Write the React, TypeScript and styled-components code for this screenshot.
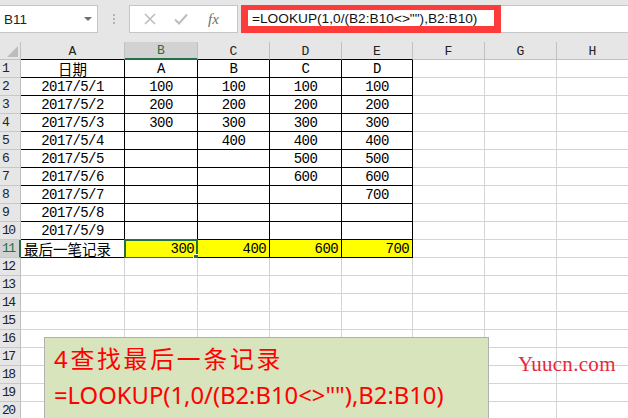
import React, { Fragment } from "react";
import styled, { createGlobalStyle } from "styled-components";

const GlobalStyle = createGlobalStyle`
  html, body {
    margin: 0;
    padding: 0;
    background: #ffffff;
    overflow: hidden;
  }
`;

const GREEN = "#217346";
const GRID = "#d4d4d4";

//page
const Page = styled.div`
  position: relative;
  width: 628px;
  height: 418px;
  overflow: hidden;
  background: #ffffff;
`;

//formula bar
const TopBar = styled.div`
  display: flex;
  align-items: flex-start;
  height: 42px;
  padding-top: 5px;
  box-sizing: border-box;
  background: #e6e6e6;
`;
const NameBox = styled.div`
  position: relative;
  display: flex;
  align-items: center;
  width: 98px;
  height: 28px;
  box-sizing: border-box;
  padding-left: 4px;
  background: #ffffff;
  border: 1px solid #c6c6c6;
  border-left: none;
  font-family: "Liberation Sans", Arial, sans-serif;
  font-size: 13.5px;
  color: #222;
`;
const DropArrow = styled.span`
  position: absolute;
  right: 5px;
  top: 11px;
  width: 0;
  height: 0;
  border-left: 4px solid transparent;
  border-right: 4px solid transparent;
  border-top: 4px solid #707070;
`;
const Dots = styled.div`
  display: flex;
  flex-direction: column;
  align-items: center;
  justify-content: center;
  gap: 2px;
  width: 31px;
  height: 28px;
  span {
    width: 2px;
    height: 2px;
    background: #b4b4b4;
  }
`;
const IconBox = styled.div`
  display: flex;
  align-items: center;
  width: 109px;
  height: 28px;
  box-sizing: border-box;
  padding-left: 14px;
  gap: 18px;
  background: #ffffff;
  border: 1px solid #c6c6c6;
`;
const Fx = styled.span`
  font-family: "Liberation Serif", "Times New Roman", serif;
  font-style: italic;
  font-size: 15px;
  color: #6e6e6e;
  margin-left: 2px;
`;
const FormulaBox = styled.div`
  flex: 1;
  height: 28px;
  margin-left: 3px;
  box-sizing: border-box;
  background: #ffffff;
  border: 1px solid #c6c6c6;
  border-right: none;
  display: flex;
`;
const RedMark = styled.div`
  width: 260px;
  height: 28px;
  margin: -1px 0 0 -1px;
  box-sizing: border-box;
  border: 7px solid #fd3b3b;
  border-top-width: 5px;
  padding-left: 4px;
  display: flex;
  align-items: center;
  font-family: "Liberation Sans", Arial, sans-serif;
  font-size: 13.7px;
  color: #111;
  white-space: nowrap;
  overflow: hidden;
`;

//sheet
const Sheet = styled.div`
  display: grid;
  grid-template-columns: 21px 104px 73px 72px 72px 71px 72px 72px 72px;
  grid-auto-rows: 18px;
`;
const Corner = styled.div`
  position: relative;
  background: #e6e6e6;
  border-right: 1px solid #c0c0c0;
  border-bottom: 1px solid #c0c0c0;
  &::after {
    content: "";
    position: absolute;
    right: 2px;
    bottom: 2px;
    width: 0;
    height: 0;
    border-left: 11px solid transparent;
    border-bottom: 11px solid #bdbdbd;
  }
`;
const ColHead = styled.div<{ $active?: boolean; $ruled?: boolean }>`
  display: flex;
  align-items: center;
  justify-content: center;
  box-sizing: border-box;
  background: ${(p) => (p.$active ? "#d2d2d2" : "#e6e6e6")};
  color: ${(p) => (p.$active ? GREEN : "#222")};
  border-right: 1px solid #c0c0c0;
  border-bottom: ${(p) =>
    p.$active ? `2px solid ${GREEN}` : p.$ruled ? "1px solid #000" : "1px solid #c0c0c0"};
  font-family: "Liberation Mono", "Courier New", monospace;
  font-size: 13px;
  line-height: 14px;
  padding-top: 2px;
`;
const RowHead = styled.div<{ $active?: boolean }>`
  display: flex;
  align-items: flex-end;
  box-sizing: border-box;
  padding: 0 0 1px 2px;
  background: ${(p) => (p.$active ? "#d2d2d2" : "#e6e6e6")};
  color: ${(p) => (p.$active ? GREEN : "#222")};
  border-right: ${(p) => (p.$active ? `2px solid ${GREEN}` : "1px solid #c0c0c0")};
  border-bottom: 1px solid #c8c8c8;
  font-family: "Liberation Mono", monospace;
  font-size: 13px;
  line-height: 14px;
  letter-spacing: -1.5px;
`;
const Cell = styled.div<{ $ruled?: boolean; $fill?: string; $align?: string; $cjk?: boolean }>`
  position: relative;
  display: flex;
  align-items: flex-end;
  justify-content: ${(p) => p.$align || "center"};
  box-sizing: border-box;
  padding: 0 3px 1px 3px;
  background: ${(p) => p.$fill || "#ffffff"};
  border-right: 1px solid ${(p) => (p.$ruled ? "#000" : GRID)};
  border-bottom: 1px solid ${(p) => (p.$ruled ? "#000" : GRID)};
  font-family: ${(p) =>
    p.$cjk ? `"Noto Sans CJK SC", sans-serif` : `"Liberation Mono", monospace`};
  font-size: ${(p) => (p.$cjk ? "14.5px" : "14px")};
  letter-spacing: ${(p) => (p.$cjk ? "0" : "-0.6px")};
  line-height: ${(p) => (p.$cjk ? "15px" : "14px")};
  color: #000;
  white-space: nowrap;
`;
const Selection = styled.div`
  position: absolute;
  top: -1px;
  left: -1px;
  width: 74px;
  height: 20px;
  box-sizing: border-box;
  border: 2px solid ${GREEN};
  pointer-events: none;
  &::after {
    content: "";
    position: absolute;
    right: -4px;
    bottom: -4px;
    width: 5px;
    height: 5px;
    background: ${GREEN};
    border: 1px solid #fff;
  }
`;

//overlays
const NoteBox = styled.div`
  position: absolute;
  left: 44px;
  top: 337px;
  width: 445px;
  height: 110px;
  box-sizing: border-box;
  padding: 3px 0 0 9px;
  background: #d8e4bc;
  border: 1px solid #b0b0b0;
  font-family: "Noto Sans", "Noto Sans CJK SC", sans-serif;
  font-size: 23.8px;
  line-height: 36px;
  color: #ff0000;
  white-space: nowrap;
`;
const NoteTitle = styled.span`
  letter-spacing: 2.8px;
`;
const Watermark = styled.div`
  position: absolute;
  left: 518px;
  top: 352px;
  font-family: "Liberation Serif", "Times New Roman", serif;
  font-size: 21px;
  letter-spacing: 0.3px;
  color: #e4283c;
`;

const cols = ["A", "B", "C", "D", "E", "F", "G", "H"];
const data = [
  ["日期", "A", "B", "C", "D"],
  ["2017/5/1", "100", "100", "100", "100"],
  ["2017/5/2", "200", "200", "200", "200"],
  ["2017/5/3", "300", "300", "300", "300"],
  ["2017/5/4", "", "400", "400", "400"],
  ["2017/5/5", "", "", "500", "500"],
  ["2017/5/6", "", "", "600", "600"],
  ["2017/5/7", "", "", "", "700"],
  ["2017/5/8", "", "", "", ""],
  ["2017/5/9", "", "", "", ""],
  ["最后一笔记录", "300", "400", "600", "700"],
];
const formula = '=LOOKUP(1,0/(B2:B10<>""),B2:B10)';

const Cross = () => (
  <svg width="12" height="12" viewBox="0 0 12 12">
    <path d="M1 1L11 11M11 1L1 11" stroke="#bdbdbd" strokeWidth="1.6" fill="none" />
  </svg>
);
const Check = () => (
  <svg width="14" height="12" viewBox="0 0 14 12">
    <path d="M1 6.5L5 10.5L13 1.5" stroke="#bdbdbd" strokeWidth="2" fill="none" />
  </svg>
);

export default () => {
  return (
    <Fragment>
      <GlobalStyle />
      <Page>
        <TopBar>
          <NameBox>
            B11
            <DropArrow />
          </NameBox>
          <Dots>
            <span />
            <span />
            <span />
          </Dots>
          <IconBox>
            <Cross />
            <Check />
            <Fx>fx</Fx>
          </IconBox>
          <FormulaBox>
            <RedMark>{formula}</RedMark>
          </FormulaBox>
        </TopBar>

        <Sheet>
          <Corner />
          {cols.map((c, i) => (
            <ColHead key={c} $active={c === "B"} $ruled={i < 5}>
              {c}
            </ColHead>
          ))}
          {Array.from({ length: 20 }, (_, r) => {
            const row = data[r];
            const last = r === 10;
            return (
              <Fragment key={r}>
                <RowHead $active={last}>{r + 1}</RowHead>
                {cols.map((c, ci) => {
                  const inTable = !!row && ci < 5;
                  const value = inTable ? row[ci] : "";
                  return (
                    <Cell
                      key={c}
                      $ruled={inTable}
                      $fill={last && ci >= 1 && ci < 5 ? "#ffff00" : undefined}
                      $align={last ? (ci === 0 ? "flex-start" : "flex-end") : "center"}
                      $cjk={/[\u4e00-\u9fff]/.test(value)}
                    >
                      {value}
                      {last && ci === 1 && <Selection />}
                    </Cell>
                  );
                })}
              </Fragment>
            );
          })}
        </Sheet>

        <NoteBox>
          <NoteTitle>4查找最后一条记录</NoteTitle>
          <br />
          {formula}
        </NoteBox>
        <Watermark>Yuucn.com</Watermark>
      </Page>
    </Fragment>
  );
};
